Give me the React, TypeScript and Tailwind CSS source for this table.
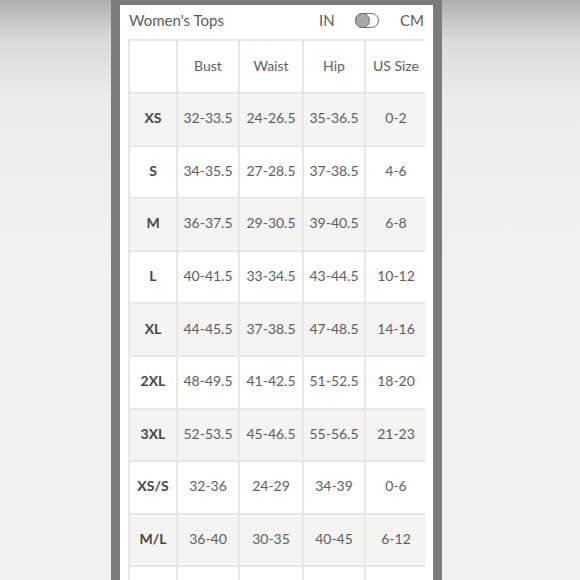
const rows: [string, string, string, string, string][] = [
  ["XS", "32-33.5", "24-26.5", "35-36.5", "0-2"],
  ["S", "34-35.5", "27-28.5", "37-38.5", "4-6"],
  ["M", "36-37.5", "29-30.5", "39-40.5", "6-8"],
  ["L", "40-41.5", "33-34.5", "43-44.5", "10-12"],
  ["XL", "44-45.5", "37-38.5", "47-48.5", "14-16"],
  ["2XL", "48-49.5", "41-42.5", "51-52.5", "18-20"],
  ["3XL", "52-53.5", "45-46.5", "55-56.5", "21-23"],
  ["XS/S", "32-36", "24-29", "34-39", "0-6"],
  ["M/L", "36-40", "30-35", "40-45", "6-12"],
  ["", "", "", "", ""],
];

function Toggle() {
  return (
    <div className="w-[24px] h-[15px] rounded-full border border-[#6f6f6f] bg-white relative">
      <div className="absolute left-[-1px] top-[-1px] w-[15px] h-[15px] rounded-full bg-[#a9a9a7] border border-[#6f6f6f]" />
    </div>
  );
}

export default function App() {
  return (
    <div
      className="w-[580px] h-[580px] overflow-hidden flex bg-[linear-gradient(to_bottom,#b0b0b0_0px,#dadada_40px,#ececec_100px,#f2f2f2_300px)]"
      style={{ fontFamily: "Lato, 'Open Sans', sans-serif" }}
    >
      <div className="ml-[111px] w-[331px] h-full bg-[#7b7b7b] pt-[5px] px-[9px]">
        <div className="w-[313px] h-full bg-white px-[8px]">
          <div className="h-[34px] pb-[4px] flex items-center text-[15px] text-[#5c5c5c]">
            <span className="flex-1 pl-[1px]">Women's Tops</span>
            <span className="w-[16px]">IN</span>
            <div className="ml-[20px] mr-[21px]">
              <Toggle />
            </div>
            <span className="pr-[1px]">CM</span>
          </div>
          <div className="grid grid-cols-[46px_60px_62px_60px_60px] gap-[2px] p-[2px] bg-[#e7e7e6]">
            {["", "Bust", "Waist", "Hip", "US Size"].map((h, i) => (
              <div
                key={i}
                className="h-[51px] pb-[2px] bg-white flex items-center justify-center text-[14px] text-[#5e5e5e]"
              >
                {h}
              </div>
            ))}
            {rows.map((r, ri) =>
              r.map((c, ci) => (
                <div
                  key={ri + "-" + ci}
                  className={
                    "h-[50.6px] pb-[3px] flex items-center justify-center text-[14px] " +
                    (ri % 2 === 0 ? "bg-[#f4f4f3] " : "bg-white ") +
                    (ci === 0 ? "font-bold text-[#474747]" : "text-[#5e5e5e]")
                  }
                >
                  {c}
                </div>
              ))
            )}
          </div>
        </div>
      </div>
    </div>
  );
}
